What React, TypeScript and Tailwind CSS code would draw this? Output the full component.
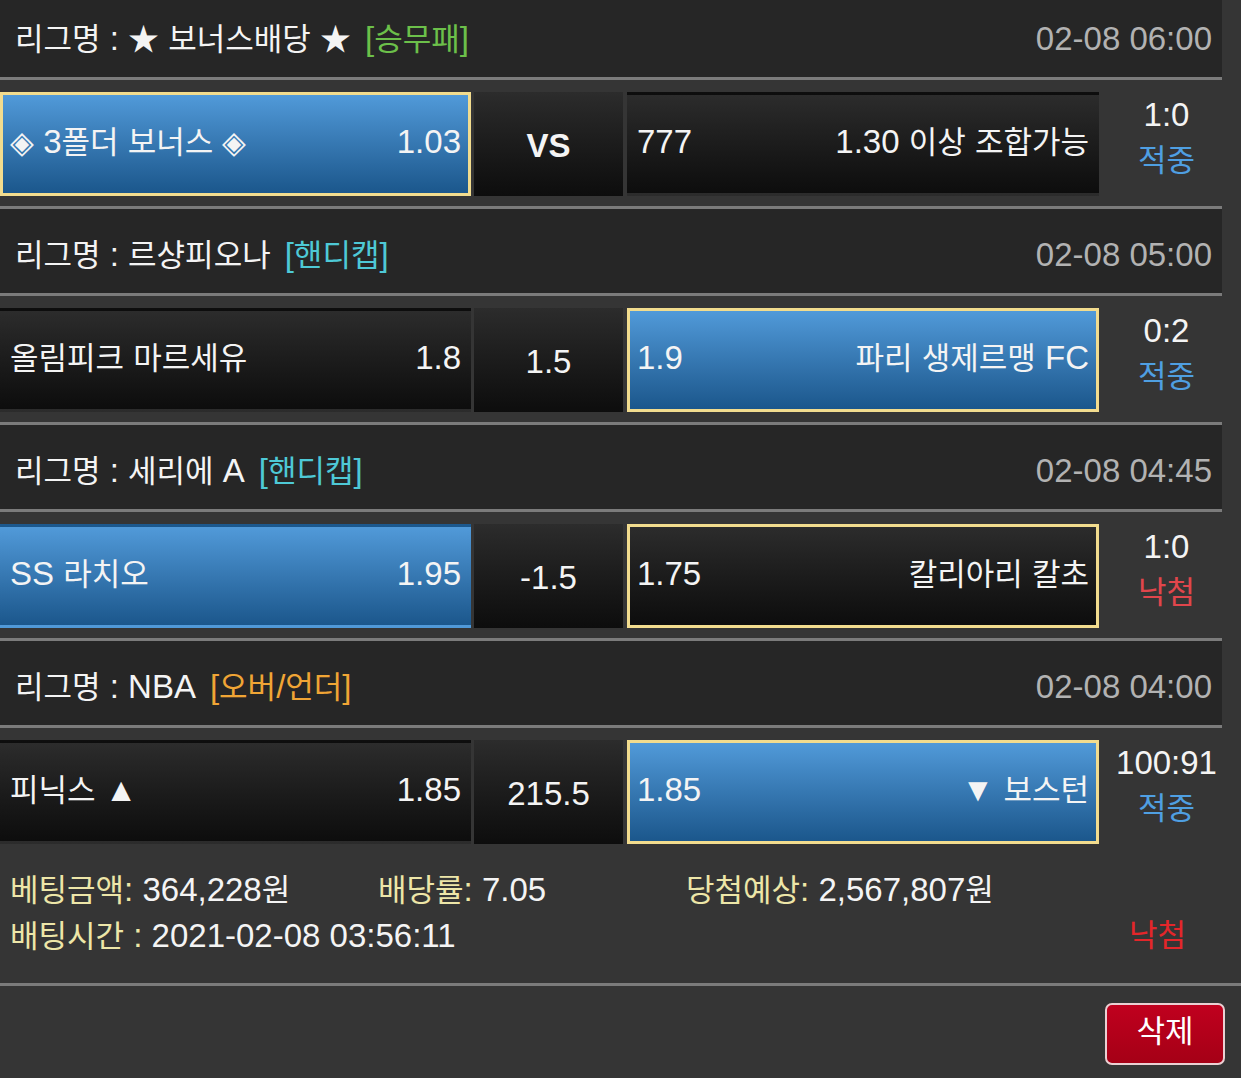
import React from 'react';

type Match = {
    league: string;
    tag: string;
    tagColor: string;
    date: string;
    home: string;
    homeOdds: string;
    mid: string;
    midBold?: boolean;
    awayOdds: string;
    away: string;
    pick: 'home' | 'away';
    pickBlue: 'home' | 'away';
    score: string;
    result: string;
    win: boolean;
};

const matches: Match[] = [
    {
        league: '★ 보너스배당 ★',
        tag: '[승무패]',
        tagColor: 'text-[#6cc04a]',
        date: '02-08 06:00',
        home: '◈ 3폴더 보너스 ◈',
        homeOdds: '1.03',
        mid: 'VS',
        midBold: true,
        awayOdds: '777',
        away: '1.30 이상 조합가능',
        pick: 'home',
        pickBlue: 'home',
        score: '1:0',
        result: '적중',
        win: true,
    },
    {
        league: '르샹피오나',
        tag: '[핸디캡]',
        tagColor: 'text-[#4ec9d6]',
        date: '02-08 05:00',
        home: '올림피크 마르세유',
        homeOdds: '1.8',
        mid: '1.5',
        awayOdds: '1.9',
        away: '파리 생제르맹 FC',
        pick: 'away',
        pickBlue: 'away',
        score: '0:2',
        result: '적중',
        win: true,
    },
    {
        league: '세리에 A',
        tag: '[핸디캡]',
        tagColor: 'text-[#4ec9d6]',
        date: '02-08 04:45',
        home: 'SS 라치오',
        homeOdds: '1.95',
        mid: '-1.5',
        awayOdds: '1.75',
        away: '칼리아리 칼초',
        pick: 'away',
        pickBlue: 'home',
        score: '1:0',
        result: '낙첨',
        win: false,
    },
    {
        league: 'NBA',
        tag: '[오버/언더]',
        tagColor: 'text-[#f0a535]',
        date: '02-08 04:00',
        home: '피닉스 ▲',
        homeOdds: '1.85',
        mid: '215.5',
        awayOdds: '1.85',
        away: '▼ 보스턴',
        pick: 'away',
        pickBlue: 'away',
        score: '100:91',
        result: '적중',
        win: true,
    },
];

const blue = 'bg-gradient-to-b from-[#519ad9] to-[#1b578c]';
const dark = 'bg-gradient-to-b from-[#2c2c2c] to-[#0d0d0d]';

// latin runs are a bit larger than the hangul in the original
function T({ s }: { s: string }) {
    const parts = s.match(/[\uAC00-\uD7A3★◈]+|[^\uAC00-\uD7A3★◈]+/g) || [];
    return (
        <>
            {parts.map((p, i) =>
                /[\uAC00-\uD7A3★◈]/.test(p) ? (
                    <span key={i}>{p}</span>
                ) : (
                    <span key={i} className="text-[33px]">{p}</span>
                )
            )}
        </>
    );
}

function Cell({ left, right, isBlue, picked, w }: { left: string; right: string; isBlue: boolean; picked: boolean; w: string }) {
    return (
        <div
            className={`${w} h-[104px] flex items-center justify-between px-[7px] border-[3px] ${picked ? 'border-[#f2dc8e]' : 'border-transparent'} ${isBlue ? blue : dark}`}
        >
            <span className="pb-[4px] whitespace-pre"><T s={left} /></span>
            <span className="pb-[4px] whitespace-pre"><T s={right} /></span>
        </div>
    );
}

export default function App() {
    return (
        <div
            className="min-h-screen flex flex-col bg-[#353535] text-[#f4f4f4] text-[31px] overflow-hidden"
            style={{ fontFamily: "'Liberation Sans', 'Noto Sans CJK KR', sans-serif" }}
        >
            <div className="-mt-[10px] w-[1222px]">
                {matches.map((m, i) => (
                    <div key={i}>
                        <div className="h-[90px] border-y-[3px] border-[#7b7b7b] bg-[#262626] flex items-center justify-between pl-[15px] pr-[10px] pt-[8px]">
                            <div className="flex items-center gap-[14px] whitespace-pre">
                                <span><T s={`리그명 : ${m.league}`} /></span>
                                <span className={m.tagColor}><T s={m.tag} /></span>
                            </div>
                            <span className="text-[#b2b2b2] text-[33px]">{m.date}</span>
                        </div>
                        <div className="h-[126px] pt-[12px] pb-[10px] flex">
                            <Cell
                                w="w-[471px]"
                                left={m.home}
                                right={m.homeOdds}
                                isBlue={m.pickBlue === 'home'}
                                picked={m.pick === 'home'}
                            />
                            <div className={`ml-[3px] w-[149px] h-[104px] flex items-center justify-center pt-[4px] ${dark}`}>
                                <span className={`text-[33px] ${m.midBold ? 'font-bold' : ''}`}>{m.mid}</span>
                            </div>
                            <div className="ml-[4px]">
                                <Cell
                                    w="w-[472px]"
                                    left={m.awayOdds}
                                    right={m.away}
                                    isBlue={m.pickBlue === 'away'}
                                    picked={m.pick === 'away'}
                                />
                            </div>
                            <div className="flex-1 ml-[12px] flex flex-col items-center leading-[46px]">
                                <span className="text-[33px]">{m.score}</span>
                                <span className={m.win ? 'text-[#4f9fe2]' : 'text-[#e1464c]'}>{m.result}</span>
                            </div>
                        </div>
                    </div>
                ))}
            </div>

            <div className="pt-[13px] pb-[24px] pl-[10px] leading-[45px] whitespace-pre">
                <div className="flex">
                    <div className="w-[368px]">
                        <span className="text-[#ede6a8]"><T s="베팅금액:" /></span><T s=" 364,228원" />
                    </div>
                    <div className="w-[308px]">
                        <span className="text-[#ede6a8]"><T s="배당률:" /></span><T s=" 7.05" />
                    </div>
                    <div>
                        <span className="text-[#ede6a8]"><T s="당첨예상:" /></span><T s=" 2,567,807원" />
                    </div>
                </div>
                <div className="flex justify-between pr-[55px]">
                    <div>
                        <span className="text-[#ede6a8]"><T s="배팅시간 :" /></span><T s=" 2021-02-08 03:56:11" />
                    </div>
                    <span className="text-[#e4262a]">낙첨</span>
                </div>
            </div>

            <div className="border-t-[3px] border-[#7b7b7b] flex justify-end pt-[17px] pr-[16px]">
                <button className="w-[120px] h-[62px] rounded-[7px] border-[2px] border-[#ead0d3] bg-gradient-to-b from-[#c0001e] to-[#a50016] text-white text-[31px] pb-[3px]">
                    삭제
                </button>
            </div>
        </div>
    );
}
